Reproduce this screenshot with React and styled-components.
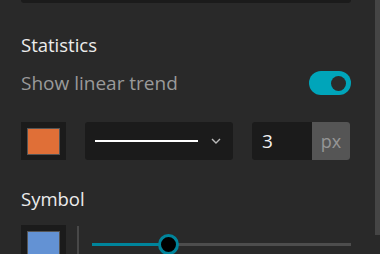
import React from "react";
import styled, { createGlobalStyle } from "styled-components";

const GlobalStyle = createGlobalStyle`
  html, body {
    margin: 0;
    padding: 0;
    background: #292929;
  }
  body {
    font-family: "Open Sans", Lato, sans-serif;
  }
`;

const Frame = styled.div`
  display: flex;
  width: 380px;
  height: 254px;
  overflow: hidden;
  background: #292929;
`;

const Panel = styled.div`
  flex: 1;
  padding: 0 24px 0 21px;
`;

const Scrollbar = styled.div`
  width: 5px;
  height: 235px;
  background: #454545;
`;

const CutField = styled.div`
  height: 3px;
  background: #1b1b1b;
  border-radius: 0 0 3px 3px;
`;

const Heading = styled.h3`
  margin: ${p => p.top}px 0 0;
  font-size: 18.5px;
  font-weight: 500;
  line-height: 24px;
  color: #ececec;
`;

const ToggleRow = styled.div`
  display: flex;
  align-items: center;
  justify-content: space-between;
  margin-top: 14px;
  height: 24px;
`;

const Label = styled.span`
  font-size: 19px;
  color: #9a9a9a;
`;

const Switch = styled.div`
  width: 42px;
  height: 24px;
  border-radius: 12px;
  background: #00a5ba;
  display: flex;
  align-items: center;
  justify-content: flex-end;
  padding-right: 5px;
  box-sizing: border-box;
`;

const Knob = styled.div`
  width: 15px;
  height: 15px;
  border-radius: 50%;
  background: #2b2b2b;
`;

const Row = styled.div`
  display: flex;
  margin-top: ${p => p.top}px;
  height: 38px;
  gap: 19px;
`;

const SwatchBox = styled.div`
  width: 45px;
  height: 38px;
  box-sizing: border-box;
  padding: 6px;
  background: #1b1b1b;
  flex-shrink: 0;
`;

const Swatch = styled.div`
  width: 100%;
  height: 27px;
  box-sizing: border-box;
  border: 1px solid #555;
  background: ${p => p.color};
`;

const Select = styled.div`
  width: 148px;
  display: flex;
  align-items: center;
  padding: 0 12px 0 10px;
  box-sizing: border-box;
  background: #1b1b1b;
  border-radius: 3px;
`;

const LinePreview = styled.div`
  flex: 1;
  height: 2px;
  background: #ffffff;
  margin-right: 13px;
`;

const NumberField = styled.div`
  display: flex;
  width: 98px;
  border-radius: 3px;
  overflow: hidden;
  background: #1b1b1b;
`;

const Value = styled.div`
  flex: 1;
  display: flex;
  align-items: center;
  padding-left: 10px;
  font-size: 19px;
  color: #f2f2f2;
`;

const Unit = styled.div`
  width: 38px;
  display: flex;
  align-items: center;
  justify-content: center;
  background: #555555;
  color: #959595;
  font-size: 18px;
`;

const SymbolRow = styled.div`
  display: flex;
  margin-top: 14px;
  height: 38px;
`;

const Divider = styled.div`
  width: 2px;
  height: 100%;
  margin: 1px 13px 0 11px;
  background: #484848;
`;

const Slider = styled.div`
  flex: 1;
  position: relative;
  height: 38px;
`;

const Track = styled.div`
  position: absolute;
  left: 0;
  right: 0;
  top: 18px;
  height: 3px;
  background: #4d4d4d;
`;

const Fill = styled.div`
  position: absolute;
  left: 0;
  top: 18px;
  height: 3px;
  background: #00849b;
`;

const Thumb = styled.div`
  position: absolute;
  top: 9px;
  width: 21px;
  height: 21px;
  margin-left: -10px;
  box-sizing: border-box;
  border-radius: 50%;
  border: 3px solid #00849b;
  background: #000;
`;

export default function App() {
  const pct = 29.5;
  return (
    <Frame>
      <GlobalStyle />
      <Panel>
        <CutField />
        <Heading top={30}>Statistics</Heading>
        <ToggleRow>
          <Label>Show linear trend</Label>
          <Switch>
            <Knob />
          </Switch>
        </ToggleRow>
        <Row top={27}>
          <SwatchBox>
            <Swatch color="#e06f37" />
          </SwatchBox>
          <Select>
            <LinePreview />
            <svg width="10" height="6" viewBox="0 0 10 6">
              <path d="M1 1 L5 5 L9 1" stroke="#bbb" strokeWidth="1.4" fill="none" />
            </svg>
          </Select>
          <NumberField>
            <Value>3</Value>
            <Unit>px</Unit>
          </NumberField>
        </Row>
        <Heading top={27}>Symbol</Heading>
        <SymbolRow>
          <SwatchBox>
            <Swatch color="#6392d4" />
          </SwatchBox>
          <Divider />
          <Slider>
            <Track />
            <Fill style={{ width: `${pct}%` }} />
            <Thumb style={{ left: `${pct}%` }} />
          </Slider>
        </SymbolRow>
      </Panel>
      <Scrollbar />
    </Frame>
  );
}
